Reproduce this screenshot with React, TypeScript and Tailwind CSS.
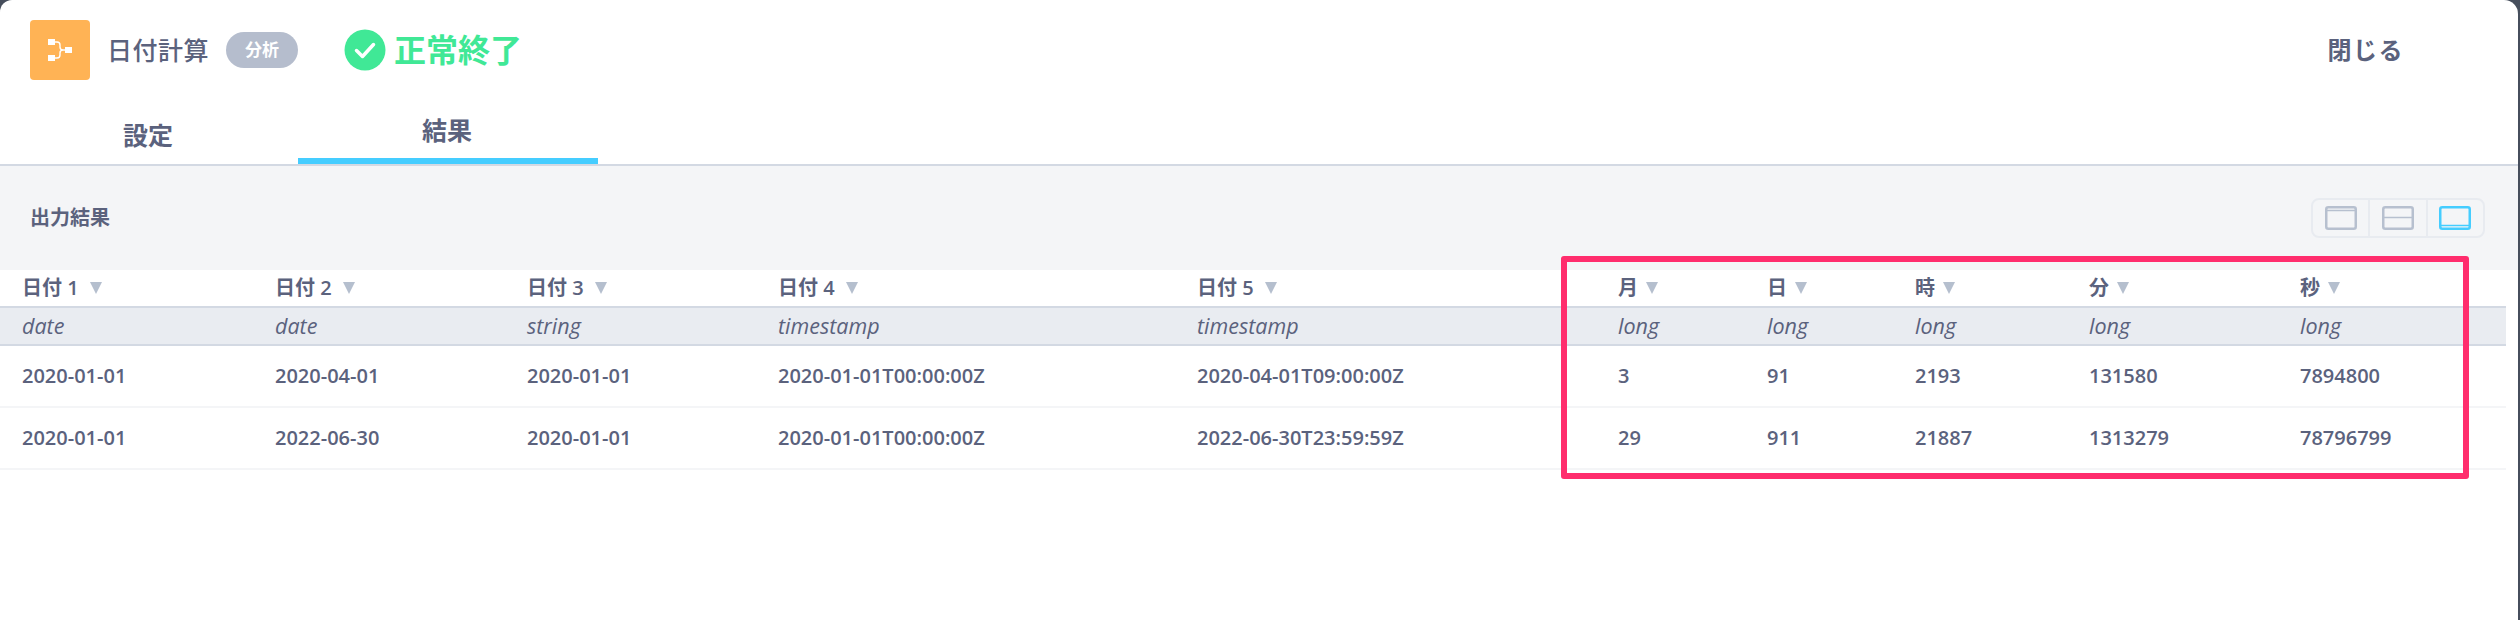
const columns = [
  { name: "日付 1", type: "date", w: "w-[275px]", pad: "pl-[22px]", values: ["2020-01-01", "2020-01-01"], gap: "gap-[11px]" },
  { name: "日付 2", type: "date", w: "w-[252px]", pad: "", values: ["2020-04-01", "2022-06-30"], gap: "gap-[11px]" },
  { name: "日付 3", type: "string", w: "w-[251px]", pad: "", values: ["2020-01-01", "2020-01-01"], gap: "gap-[11px]" },
  { name: "日付 4", type: "timestamp", w: "w-[419px]", pad: "", values: ["2020-01-01T00:00:00Z", "2020-01-01T00:00:00Z"], gap: "gap-[11px]" },
  { name: "日付 5", type: "timestamp", w: "w-[421px]", pad: "", values: ["2020-04-01T09:00:00Z", "2022-06-30T23:59:59Z"], gap: "gap-[11px]" },
  { name: "月", type: "long", w: "w-[149px]", pad: "", values: ["3", "29"], gap: "gap-[8px]" },
  { name: "日", type: "long", w: "w-[148px]", pad: "", values: ["91", "911"], gap: "gap-[8px]" },
  { name: "時", type: "long", w: "w-[174px]", pad: "", values: ["2193", "21887"], gap: "gap-[8px]" },
  { name: "分", type: "long", w: "w-[211px]", pad: "", values: ["131580", "1313279"], gap: "gap-[8px]" },
  { name: "秒", type: "long", w: "w-[206px]", pad: "", values: ["7894800", "78796799"], gap: "gap-[8px]" },
];

function Logo() {
  return (
    <div className="w-[60px] h-[60px] rounded-[4px] bg-[#ffb355] flex items-center justify-center">
      <svg width="60" height="60" viewBox="0 0 60 60" fill="none">
        <rect x="18" y="19" width="7" height="6" fill="#fff" />
        <rect x="18" y="35" width="7" height="6" fill="#fff" />
        <rect x="35" y="27" width="7" height="6" fill="#fff" />
        <path d="M25 22h2c2 0 3 1 3 3v2c0 2 1 3 3 3h2M25 38h2c2 0 3-1 3-3v-2c0-2 1-3 3-3" stroke="#fff" strokeWidth="1.4" />
      </svg>
    </div>
  );
}

function Check() {
  return (
    <svg width="42" height="42" viewBox="0 0 42 42">
      <circle cx="21" cy="21" r="20.5" fill="#40e896" />
      <path d="M12.5 21.5l6 6 11-12" fill="none" stroke="#fff" strokeWidth="3.5" strokeLinecap="round" strokeLinejoin="round" />
    </svg>
  );
}

function Tri() {
  return (
    <svg width="12" height="12" viewBox="0 0 12 12" className="shrink-0">
      <path d="M0 0h12L6 12z" fill="#b5bfce" />
    </svg>
  );
}

function LayoutIcon({ kind }: { kind: 0 | 1 | 2 }) {
  const c = kind === 2 ? "#45cdff" : "#b7c0cf";
  const y = kind === 0 ? 4.5 : kind === 1 ? 11.5 : 19.5;
  return (
    <svg width="32" height="24" viewBox="0 0 32 24" fill="none">
      <rect x="1.25" y="1.25" width="29.5" height="21.5" rx="2" stroke={c} strokeWidth="2.5" />
      <path d={`M1 ${y}H31`} stroke={c} strokeWidth="1.5" />
    </svg>
  );
}

export default function App() {
  return (
    <div className="relative w-[2520px] h-[620px] bg-[#464e5c] overflow-hidden">
      <div className="w-[2518px] h-[620px] bg-white rounded-tl-[12px] rounded-tr-[14px] text-[#5b627d] font-['Open_Sans','Noto_Sans_CJK_JP',sans-serif]">
        <header className="h-[100px] flex items-center pl-[30px] pr-[114px]">
          <Logo />
          <span className="ml-[17px] text-[25px] font-medium leading-none tracking-[0.5px]">日付計算</span>
          <span className="ml-[17px] w-[72px] h-[36px] rounded-full bg-[#b5bdcd] text-white text-[17px] font-bold flex items-center justify-center">分析</span>
          <span className="ml-[46px]"><Check /></span>
          <span className="ml-[8px] text-[32px] font-bold leading-none text-[#40e896]">正常終了</span>
          <span className="ml-auto text-[24px] font-bold leading-none tracking-[1.5px]">閉じる</span>
        </header>

        <nav className="h-[66px] flex border-b-2 border-[#d3d9e3] text-[25px] font-bold">
          <div className="w-[298px] flex items-start justify-center pt-[17px] pr-[2px]">設定</div>
          <div className="w-[300px] h-[64px] flex items-start justify-center pt-[12px] pr-[2px] border-b-[6px] border-[#45cdff]">結果</div>
        </nav>

        <section className="h-[104px] bg-[#f4f5f7] flex items-center justify-between pl-[30px] pr-[33px]">
          <h2 className="text-[20px] font-semibold">出力結果</h2>
          <div className="flex h-[40px] w-[174px] border-2 border-[#e8ebf0] rounded-[8px]">
            {([0, 1, 2] as const).map((k) => (
              <div key={k} className={`flex-1 flex items-center justify-center ${k < 2 ? "border-r-2 border-[#e8ebf0]" : ""}`}>
                <LayoutIcon kind={k} />
              </div>
            ))}
          </div>
        </section>

        <div className="w-[2506px]">
          <div className="flex h-[38px] items-center border-b-2 border-[#d3d9e3] text-[20px] font-semibold">
            {columns.map((c) => (
              <div key={c.name} className={`${c.w} ${c.pad} ${c.gap} flex items-center`}>
                <span>{c.name}</span>
                <Tri />
              </div>
            ))}
          </div>
          <div className="flex h-[38px] items-center bg-[#e9ecf1] border-b-2 border-[#d3d9e3] text-[21.5px] italic font-medium">
            {columns.map((c) => (
              <div key={c.name} className={`${c.w} ${c.pad}`}>{c.type}</div>
            ))}
          </div>
          {[0, 1].map((r) => (
            <div key={r} className="flex h-[62px] items-center border-b-2 border-[#f4f5f7] text-[20px] font-semibold">
              {columns.map((c) => (
                <div key={c.name} className={`${c.w} ${c.pad}`}>{c.values[r]}</div>
              ))}
            </div>
          ))}
        </div>
      </div>

      <div className="absolute left-[1561px] top-[256px] w-[908px] h-[223px] border-[6px] border-[#ff2d6d] rounded-[3px]" />
    </div>
  );
}
